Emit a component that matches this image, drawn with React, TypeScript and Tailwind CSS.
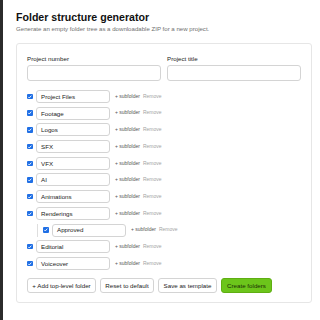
import { useState } from 'react';

interface Folder {
  id: number;
  name: string;
  children?: Folder[];
}

const initialFolders: Folder[] = [
  { id: 1, name: 'Project Files' },
  { id: 2, name: 'Footage' },
  { id: 3, name: 'Logos' },
  { id: 4, name: 'SFX' },
  { id: 5, name: 'VFX' },
  { id: 6, name: 'AI' },
  { id: 7, name: 'Animations' },
  { id: 8, name: 'Renderings', children: [{ id: 9, name: 'Approved' }] },
  { id: 10, name: 'Editorial' },
  { id: 11, name: 'Voiceover' },
];

const Check = () => (
  <span className="flex h-[5.5px] w-[5.5px] shrink-0 items-center justify-center rounded-[1px] bg-[#1f6fe5]">
    <svg viewBox="0 0 10 10" className="h-[5.5px] w-[5.5px]">
      <path d="M2.2 5.2 L4.2 7.2 L7.9 2.9" fill="none" stroke="#fff" strokeWidth="1.6" />
    </svg>
  </span>
);

const FolderRow = ({ name }: { name: string }) => (
  <div className="flex h-[13px] items-center">
    <Check />
    <div className="ml-[3.5px] flex h-[13px] w-[74px] items-center rounded-[3px] border border-[#d4d4d4] bg-white px-[4px] text-[6.2px] text-[#222]">
      {name}
    </div>
    <span className="ml-[5px] text-[5px] text-[#555]">+ subfolder</span>
    <span className="ml-[3px] text-[5px] text-[#a3a3a3]">Remove</span>
  </div>
);

const App = () => {
  const [folders] = useState<Folder[]>(initialFolders);

  return (
    <div className="flex min-h-[320px] bg-white font-['Liberation_Sans',Arial,sans-serif]">
      <div className="w-[3px] shrink-0 bg-[#2b2b2b]" />
      <div className="flex-1 pl-[13px] pt-[10px]">
        <h1 className="text-[10.6px] font-bold leading-[14px] text-[#111]">Folder structure generator</h1>
        <p className="mt-[1px] text-[6.1px] leading-[8px] text-[#707070]">
          Generate an empty folder tree as a downloadable ZIP for a new project.
        </p>

        <div className="mt-[10px] w-[296px] rounded-[3px] border border-[#e6e6e6] px-[10px] pt-[11px] pb-[9px]">
          <div className="grid grid-cols-2 gap-x-[6px]">
            <div>
              <div className="text-[6.2px] font-medium leading-[8px] text-[#222]">Project number</div>
              <div className="mt-[2px] h-[16px] rounded-[3px] border border-[#d4d4d4]" />
            </div>
            <div>
              <div className="text-[6.2px] font-medium leading-[8px] text-[#222]">Project title</div>
              <div className="mt-[2px] h-[16px] rounded-[3px] border border-[#d4d4d4]" />
            </div>
          </div>

          <div className="mt-[9px] flex flex-col gap-[3.7px]">
            {folders.map((f) => (
              <div key={f.id} className="flex flex-col gap-[3.7px]">
                <FolderRow name={f.name} />
                {f.children && (
                  <div className="ml-[10px] flex flex-col border-l border-[#dedede] pl-[5px]">
                    {f.children.map((c) => (
                      <FolderRow key={c.id} name={c.name} />
                    ))}
                  </div>
                )}
              </div>
            ))}
          </div>

          <div className="mt-[8px] flex gap-[4px] text-[6.2px] text-[#222]">
            <button className="h-[15px] w-[69px] rounded-[3px] border border-[#d4d4d4] bg-white">+ Add top-level folder</button>
            <button className="h-[15px] w-[54px] rounded-[3px] border border-[#d4d4d4] bg-white">Reset to default</button>
            <button className="h-[15px] w-[59px] rounded-[3px] border border-[#d4d4d4] bg-white">Save as template</button>
            <button className="h-[15px] w-[51px] rounded-[3px] border border-[#5fae12] bg-[#6cc51b] font-medium text-[#1b2e05]">
              Create folders
            </button>
          </div>
        </div>
      </div>
    </div>
  );
};

export default App;
